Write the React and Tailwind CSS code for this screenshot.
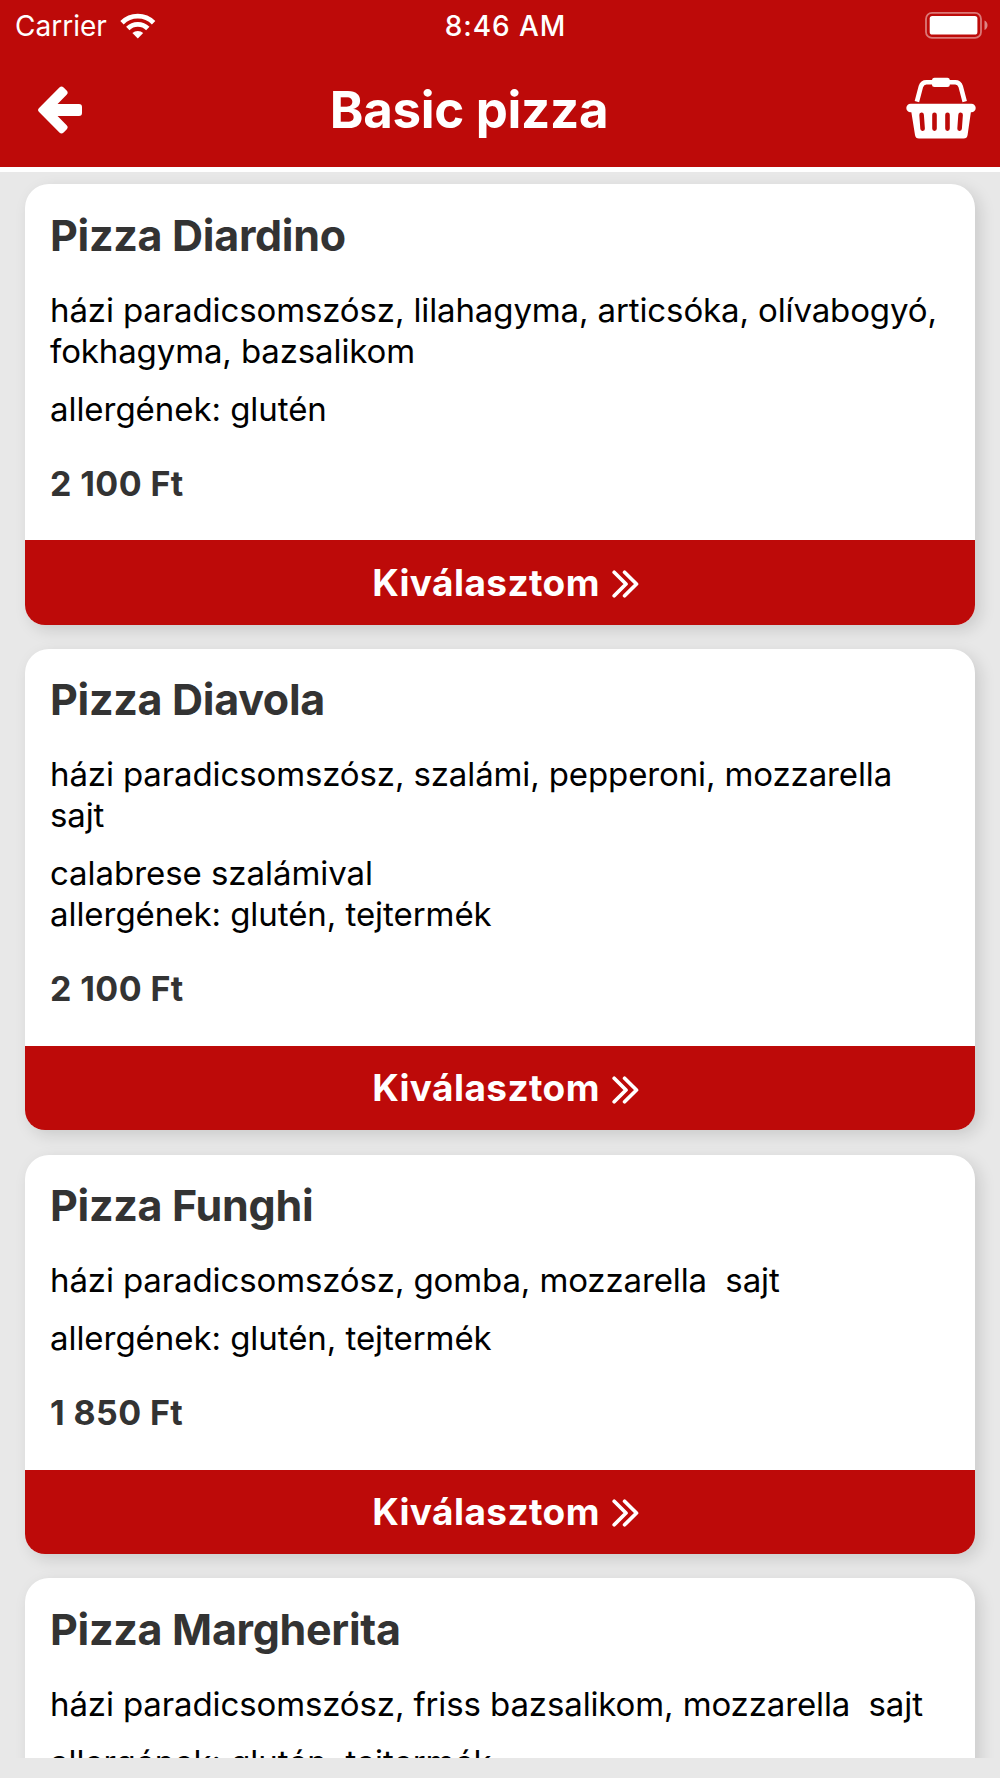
import React from 'react';

const PIZZAS = [
  {
    name: 'Pizza Diardino',
    toppings: 'házi paradicsomszósz, lilahagyma, articsóka, olívabogyó,\nfokhagyma, bazsalikom',
    notes: 'allergének: glutén',
    price: '2 100 Ft',
  },
  {
    name: 'Pizza Diavola',
    toppings: 'házi paradicsomszósz, szalámi, pepperoni, mozzarella\nsajt',
    notes: 'calabrese szalámival\nallergének: glutén, tejtermék',
    price: '2 100 Ft',
  },
  {
    name: 'Pizza Funghi',
    toppings: 'házi paradicsomszósz, gomba, mozzarella  sajt',
    notes: 'allergének: glutén, tejtermék',
    price: '1 850 Ft',
  },
  {
    name: 'Pizza Margherita',
    toppings: 'házi paradicsomszósz, friss bazsalikom, mozzarella  sajt',
    notes: 'allergének: glutén, tejtermék',
    price: '1 850 Ft',
  },
];

/* ── Icons ── */
const WifiIcon = () => (
  <svg className="w-9 h-[26px]" viewBox="0 0 36 26" fill="none" stroke="white" strokeWidth="4.8">
    <path d="M2 9.7a22.3 22.3 0 0 1 31.6 0" />
    <path d="M7.8 15.5a14.2 14.2 0 0 1 20 0" />
    <path d="M17.8 25.5L12.4 20.1a7.7 7.7 0 0 1 10.8 0z" fill="white" stroke="none" />
  </svg>
);

const BatteryIcon = () => (
  <svg className="w-16 h-7" viewBox="0 0 64 28" fill="white">
    <rect x="1" y="0.9" width="55" height="25" rx="6" fill="none" stroke="white" strokeOpacity="0.45" strokeWidth="1.8" />
    <rect x="4.7" y="4" width="47.7" height="18.5" rx="2.6" />
    <path d="M59.500 8.500c4 1.500 4 8 0 9.500z" fillOpacity="0.5" />
  </svg>
);

const BackIcon = () => (
  <svg className="w-11 h-12" viewBox="0 0 44 48" fill="white" stroke="white" strokeWidth="6" strokeLinejoin="round">
    <path d="M3.2 24L23.5 3.7l3 3-14 14.3H41v6H12.5l14 14.3-3 3z" />
  </svg>
);

const BasketIcon = () => (
  <svg className="w-[70px] h-[62px]" viewBox="0 0 70 62" fill="white">
    <path d="M10.9 24.7L14.9 9.5Q16.2 5.3 20.4 5.3H49.2Q53.4 5.3 54.7 9.5L58.7 24.7" fill="none" stroke="white" strokeWidth="4.6" />
    <rect x="26" y="0.7" width="17.8" height="9.3" rx="2.5" />
    <rect x="0.3" y="26.7" width="69.4" height="8.6" rx="4.3" />
    <path d="M5 33h60.2L61.6 58q-.5 3.500-4 3.500H13q-3.500 0-4-3.500z" />
    <path d="M15.600 37.8l1 13.8M28.5 37.8v13.8M41.5 37.8v13.8M54.6 37.8l-1 13.8" fill="none" stroke="#bd0a09" strokeWidth="4.6" strokeLinecap="round" />
  </svg>
);

const DoubleChevron = () => (
  <svg className="w-[27px] h-7" viewBox="0 0 27 28" fill="none" stroke="white" strokeWidth="3.7" strokeLinecap="round" strokeLinejoin="round">
    <path d="M2.2 2.2L14 14 2.2 25.8M12.6 2.2L24.5 14 12.6 25.8" />
  </svg>
);

const PizzaCard = ({ pizza }) => (
  <article className="shrink-0 rounded-t-[24px] rounded-b-[20px] overflow-hidden bg-white shadow-[5px_5px_16px_rgba(0,0,0,0.13)]">
    <div className="px-[25px] pt-[24.5px] pb-[36.5px]">
      <h2 className="text-[43px] leading-[52px] font-bold tracking-[-0.3px] text-[#333333]">{pizza.name}</h2>
      <p className="mt-[29px] text-[33px] leading-[41px] tracking-[-0.12px] whitespace-pre text-black">{pizza.toppings}</p>
      <p className="mt-[17px] text-[33px] leading-[41px] tracking-[-0.05px] whitespace-pre text-black">{pizza.notes}</p>
      <p className="mt-[33px] text-[34px] leading-[41px] font-bold tracking-[0.4px] text-[#333333]">{pizza.price}</p>
    </div>
    <button type="button" className="w-full h-[84.5px] pl-[11px] bg-[#bd0a09] flex items-center justify-center gap-3 text-white">
      <span className="text-[37px] leading-[44px] font-bold tracking-[0.4px]">Kiválasztom</span>
      <span className="pt-[3px]"><DoubleChevron /></span>
    </button>
  </article>
);

const App = () => (
  <div className="w-[1000px] h-[1778px] flex flex-col overflow-hidden bg-[#e8e8e8] font-['Inter',sans-serif]">
    <header className="shrink-0 h-[172.3px] bg-[#bd0a09] border-b-[5px] border-white text-white">
      <div className="grid grid-cols-3 items-center h-[50px] pt-px pl-[15px] pr-[11px] text-[28px]">
        <div className="flex items-center gap-[13px]">
          <span>Carrier</span>
          <WifiIcon />
        </div>
        <span className="pl-[7px] text-center font-medium tracking-[0.9px]">8:46 AM</span>
        <div className="flex justify-end">
          <BatteryIcon />
        </div>
      </div>
      <div className="flex items-center justify-between h-[117px] pl-[38px] pr-6">
        <button type="button" aria-label="Vissza" className="pt-[3px]"><BackIcon /></button>
        <h1 className="mr-[50px] pt-[2px] text-[51px] leading-[62px] font-bold tracking-[-0.3px]">Basic pizza</h1>
        <button type="button" aria-label="Kosár" className="pb-0.5"><BasketIcon /></button>
      </div>
    </header>

    <main className="h-[1585.7px] shrink-0 px-[25px] pt-3 flex flex-col gap-[24.2px] overflow-hidden">
      {PIZZAS.map((pizza) => (
        <PizzaCard key={pizza.name} pizza={pizza} />
      ))}
    </main>
  </div>
);

export default App;
